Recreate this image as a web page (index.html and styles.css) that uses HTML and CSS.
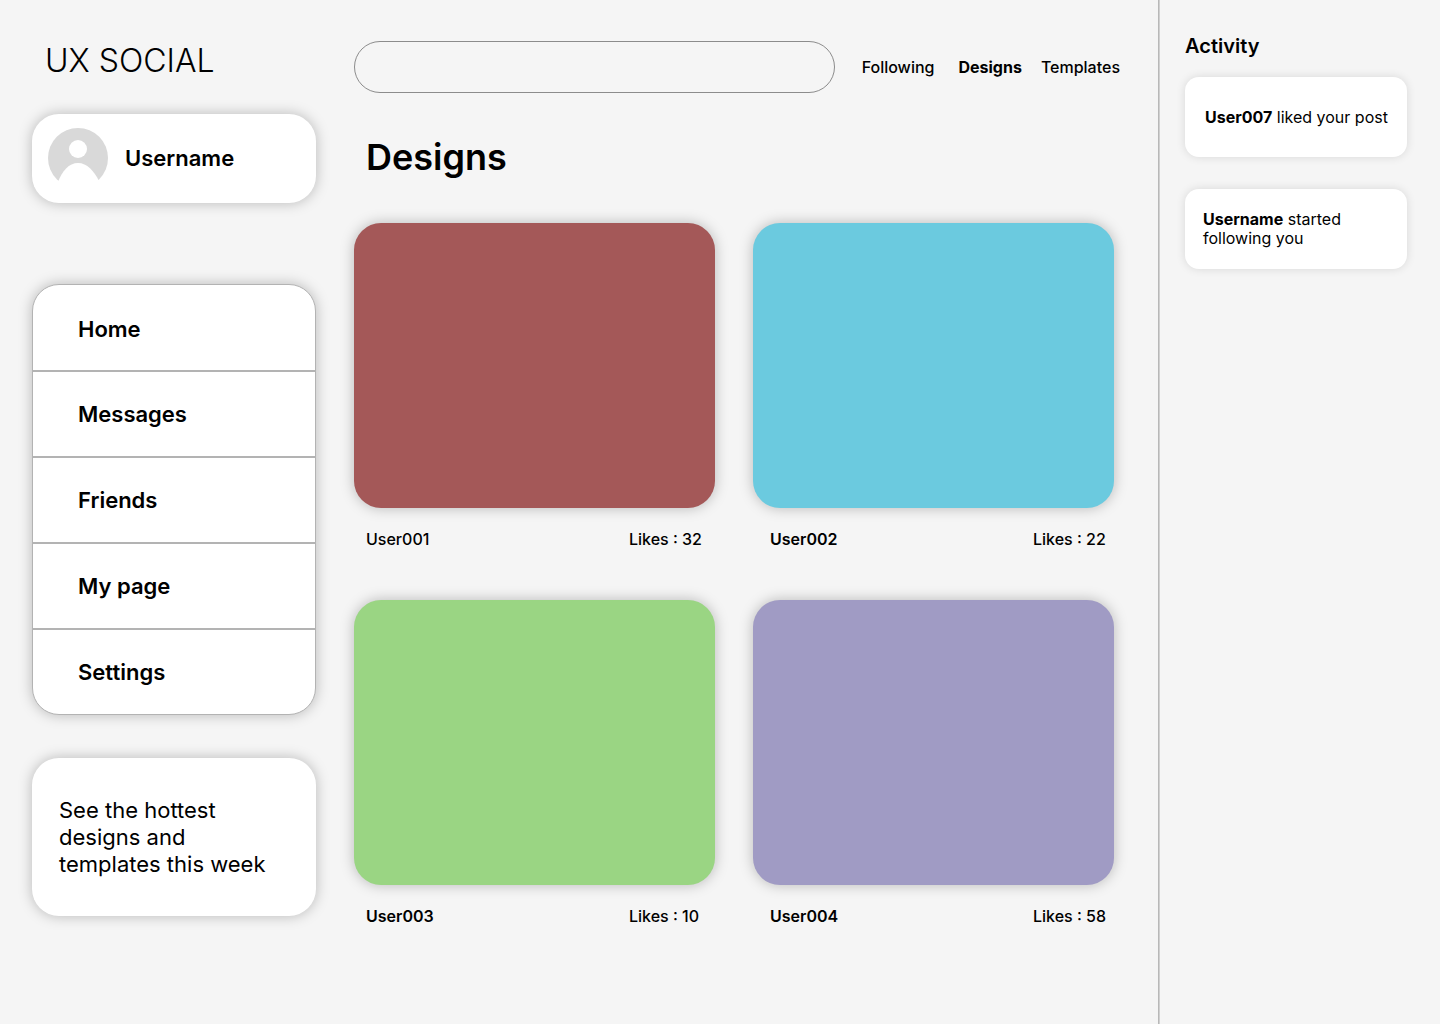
FILE: index.html
```html
<!DOCTYPE html>
<html lang="en">
<head>
<meta charset="utf-8">
<meta name="viewport" content="width=device-width, initial-scale=1">
<title>UX Social</title>
<link rel="stylesheet" href="styles.css">
</head>
<body>
<div class="layout">
  <div class="sidebar">
    <div class="logo">UX SOCIAL</div>
    <a class="profile panel" href="#">
      <svg class="avatar" viewBox="0 0 60 60" aria-hidden="true">
        <circle cx="30" cy="30" r="30" fill="#d9d9d9"/>
        <circle cx="30" cy="21" r="9" fill="#fff"/>
        <path d="M10 54C14 43 21 35 30 35S46 43 51 53V60H10Z" fill="#fff"/>
      </svg>
      <span>Username</span>
    </a>
    <nav class="menu panel" aria-label="Main">
      <a href="#">Home</a>
      <a href="#">Messages</a>
      <a href="#">Friends</a>
      <a href="#">My page</a>
      <a href="#">Settings</a>
    </nav>
    <div class="promo panel"><p>See the hottest designs and templates this week</p></div>
  </div>

  <main class="main">
    <header class="topbar">
      <input class="search" type="search" aria-label="Search">
      <nav class="tabs" aria-label="Feed">
        <a class="tab-following" href="#">Following</a>
        <a class="tab-current" href="#" aria-current="page">Designs</a>
        <a href="#">Templates</a>
      </nav>
    </header>
    <h1>Designs</h1>
    <div class="gallery">
      <article class="post">
        <div class="thumb red"></div>
        <div class="caption"><span class="user seen">User001</span><span class="likes">Likes : 32</span></div>
      </article>
      <article class="post">
        <div class="thumb blue"></div>
        <div class="caption"><span class="user">User002</span><span class="likes">Likes : 22</span></div>
      </article>
      <article class="post">
        <div class="thumb green"></div>
        <div class="caption"><span class="user">User003</span><span class="likes">Likes : 10</span></div>
      </article>
      <article class="post">
        <div class="thumb purple"></div>
        <div class="caption"><span class="user">User004</span><span class="likes">Likes : 58</span></div>
      </article>
    </div>
  </main>

  <aside class="activity">
    <h2>Activity</h2>
    <div class="notice notice-like"><p><b>User007</b> liked your post</p></div>
    <div class="notice"><p><b>Username</b> started following you</p></div>
  </aside>
</div>
</body>
</html>
```
FILE: styles.css
```css
* { box-sizing: border-box; }

body {
  margin: 0;
  background: #f5f5f5;
  color: #000;
  font-family: Inter, "Liberation Sans", sans-serif;
  font-size: 16px;
  line-height: 19px;
}

a { color: inherit; text-decoration: none; }
p, h1, h2 { margin: 0; }

.layout {
  display: grid;
  grid-template-columns: 316px minmax(0, 1fr) 282px;
  min-height: 100vh;
}

/* Left column */
.sidebar {
  display: flex;
  flex-direction: column;
  padding: 41px 0 40px 32px;
}

.logo {
  padding-left: 13px;
  font-size: 32px;
  font-weight: 350;
  line-height: 39px;
}

.panel {
  background: #fff;
  border-radius: 27px;
  box-shadow: 0 0 14px rgba(0, 0, 0, 0.25);
}

.profile {
  display: flex;
  align-items: center;
  gap: 17px;
  margin-top: 34px;
  padding: 14px 16px 15px;
  font-size: 22px;
  font-weight: 600;
  line-height: 27px;
}

.avatar { width: 60px; height: 60px; }

.menu {
  margin-top: 81px;
  border: 1px solid #b3b3b3;
  overflow: hidden;
}

.menu a {
  display: flex;
  align-items: center;
  min-height: 85px;
  padding: 4px 45px 0;
  font-size: 22px;
  font-weight: 600;
  line-height: 27px;
}

.menu a + a { min-height: 86px; border-top: 2px solid #b3b3b3; padding-top: 0; }

.promo {
  margin-top: 43px;
  padding: 39px 27px 38px;
  font-size: 22px;
  line-height: 27px;
}

/* Feed */
.main { padding: 41px 44px 40px 38px; }

.topbar {
  display: flex;
  align-items: center;
  gap: 27px;
  margin-right: -6px;
}

.search {
  flex: 1;
  min-width: 0;
  height: 52px;
  padding: 0 24px;
  border: 1px solid #8c8c8c;
  border-radius: 26px;
  background: transparent;
  font: inherit;
  appearance: none;
}

.tabs { display: flex; gap: 19px; font-weight: 500; }
.tab-following { margin-right: 5px; }
.tab-current { font-weight: 700; }

h1 {
  margin: 42px 0 44px;
  padding-left: 12px;
  font-size: 36px;
  font-weight: 600;
  line-height: 44px;
}

.gallery {
  display: grid;
  grid-template-columns: repeat(2, minmax(0, 1fr));
  gap: 51px 38px;
}

.thumb {
  aspect-ratio: 361 / 285;
  border-radius: 27px;
  box-shadow: 0 0 14px rgba(0, 0, 0, 0.25);
}

.red { background: #a45858; }
.blue { background: #6bcadf; }
.green { background: #9ad583; }
.purple { background: #a09bc4; }

.caption {
  display: flex;
  justify-content: space-between;
  padding: 22px 13px 0 12px;
}

.post:nth-child(even) .caption { padding-left: 17px; padding-right: 8px; }
.user { font-weight: 600; }
.seen { font-weight: 500; }
.likes { min-width: 73px; font-weight: 500; }

/* Right column */
.activity {
  display: flex;
  flex-direction: column;
  padding: 34px 33px 32px 26px;
  border-left: 1px solid #b8b8b8;
  box-shadow: inset 1px 0 #d0d0d0;
}

h2 {
  margin-bottom: 19px;
  font-size: 20px;
  font-weight: 600;
  line-height: 24px;
}

.notice {
  display: flex;
  align-items: center;
  min-height: 80px;
  margin-bottom: 32px;
  padding: 18px;
  border-radius: 14px;
  background: #fff;
  box-shadow: 0 0 10px rgba(0, 0, 0, 0.12);
}

.notice-like { padding-left: 20px; padding-right: 16px; }
```
